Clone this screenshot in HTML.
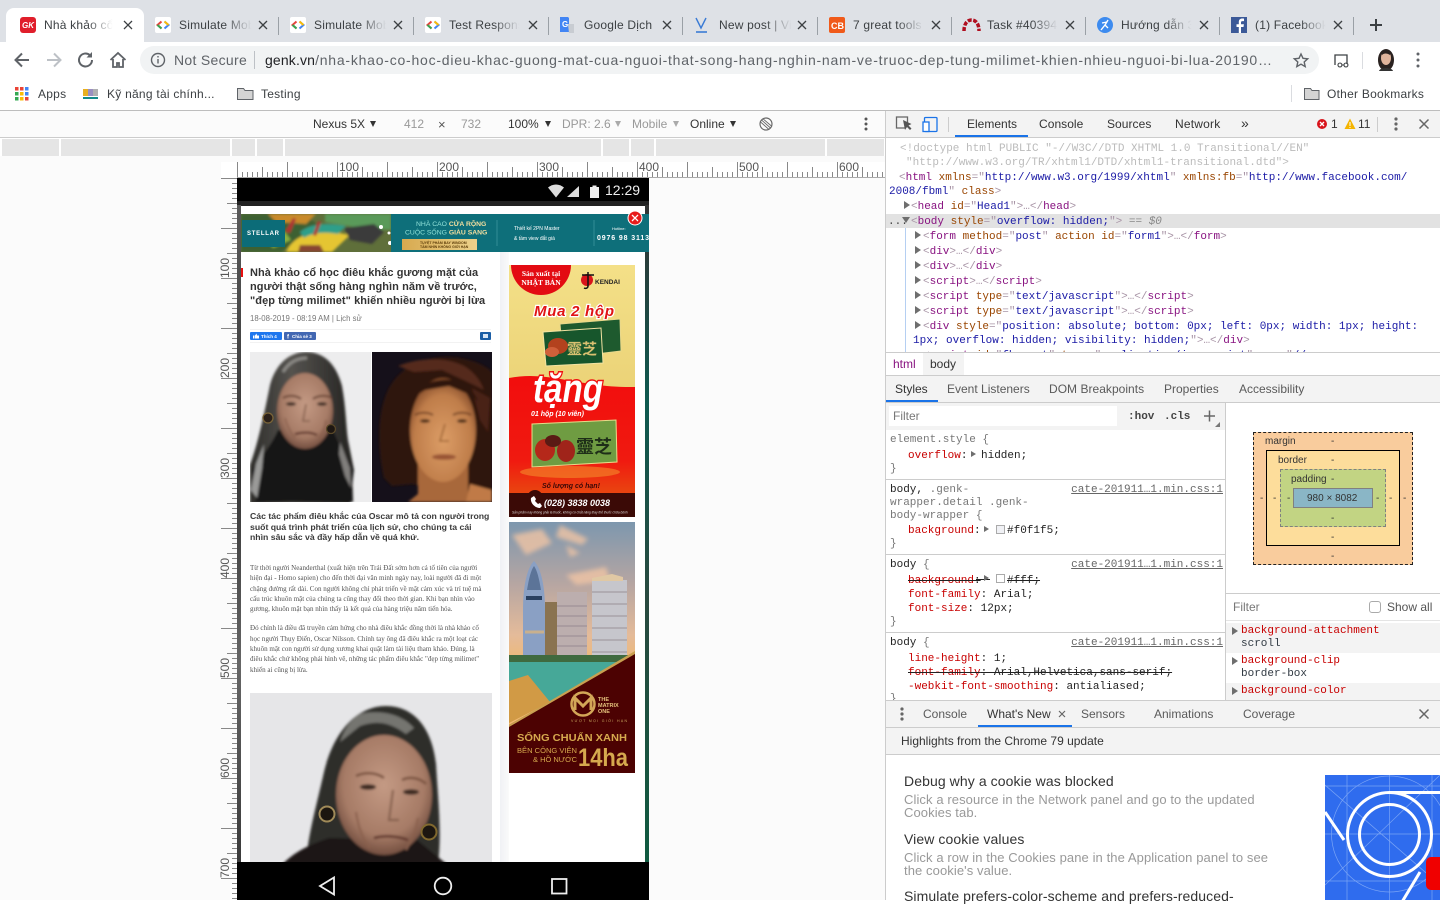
<!DOCTYPE html>
<html lang="vi"><head><meta charset="utf-8"><title>DevTools</title>
<style>
html,body{margin:0;padding:0;width:1440px;height:900px;overflow:hidden;background:#fff;font-family:"Liberation Sans",Arial,sans-serif;color:#333}
*{box-sizing:border-box}
.a{position:absolute}
.t{position:absolute;white-space:nowrap;font-size:12px;line-height:14px}
.tt{position:absolute;top:18px;white-space:nowrap;font-size:12px;letter-spacing:.2px;line-height:14px;color:#3c4043;overflow:hidden;width:74px;-webkit-mask-image:linear-gradient(90deg,#000 62%,transparent 98%);mask-image:linear-gradient(90deg,#000 62%,transparent 98%)}
.sp{position:absolute;top:17px;width:1px;height:18px;background:#9aa0a6}
.m{position:absolute;white-space:nowrap;font-family:"Liberation Mono",monospace;font-size:11px;line-height:14px;color:#303942;margin-top:3px}
.g{color:#a894a6}.p{color:#881280}.n{color:#994500}.v{color:#1a1aa6}
.r{color:#c80000}.gy{color:#777}.k{color:#222}
.lk{position:absolute;white-space:nowrap;font-family:"Liberation Mono",monospace;font-size:11px;line-height:14px;color:#666;text-decoration:underline;right:217px;margin-top:3px}
.tri{position:absolute;width:0;height:0;border-left:6px solid #6e6e6e;border-top:4px solid transparent;border-bottom:4px solid transparent}
.trid{position:absolute;width:0;height:0;border-top:6px solid #6e6e6e;border-left:4px solid transparent;border-right:4px solid transparent}
.sq{position:absolute;width:9px;height:9px;border:1px solid #aaa;background:#fff}
.bar{position:absolute;background:#f3f3f3}
.hl{position:absolute;background:#ccc}
.sg{position:absolute;top:139px;height:17px;background:#e5e5e5}
.bm{letter-spacing:.25px;color:#3c4043}
.s7{font-family:'Liberation Serif',serif;font-size:7.05px;color:#555}
.h3{font-weight:bold;font-size:11px;color:#333;letter-spacing:.07px}
.h4{font-weight:bold;font-size:8.7px;color:#3a3a3a}
.d13{font-size:13px;color:#999;letter-spacing:.09px}
.h14{font-size:14px;color:#333;letter-spacing:.09px}
.bx{font-size:10px;line-height:12px}
</style></head><body>

<!-- chrome tabs -->
<div class="a" style="left:0;top:0;width:1440px;height:42px;background:#dee1e6"></div>
<div class="a" style="left:6px;top:8px;width:138px;height:34px;background:#fff;border-radius:8px 8px 0 0"></div>
<div class="a" style="left:0;top:42px;width:1440px;height:68px;background:#fff"></div>

<svg class="a" style="left:0;top:0" width="1440" height="110" viewBox="0 0 1440 110">
 <rect x="20" y="17" width="16" height="16" rx="3" fill="#e01e2b"/>
 <text x="22" y="28" font-family="Liberation Sans" font-size="8" font-weight="bold" font-style="italic" fill="#fff">GK</text>
 <defs><g id="sim"><rect x="0" y="0" width="16" height="16" rx="2" fill="#fff"/><path d="M6.500 4.500 2.500 8l4 3.500" fill="none" stroke="#e8453c" stroke-width="2"/><path d="M2.500 8l4 3.500" stroke="#34a853" stroke-width="2" fill="none"/><path d="M9.500 4.500 13.500 8l-4 3.500" fill="none" stroke="#4285f4" stroke-width="2"/><path d="M9.500 4.500 13.500 8" stroke="#fbbc05" stroke-width="2" fill="none"/></g></defs>
 <use href="#sim" x="155" y="17"/><use href="#sim" x="290" y="17"/><use href="#sim" x="425" y="17"/>
 <path d="M560 17h8l1 1v14h-9z" fill="#4285f4"/><path d="M568 24h6v9h-5z" fill="#c8ccd2"/><text x="562" y="27" font-family="Liberation Sans" font-size="8" font-weight="bold" fill="#fff">G</text>
 <path d="M696 18l5 10 5-10" fill="none" stroke="#3a7bd5" stroke-width="1.400"/><path d="M696 32h11" stroke="#3a7bd5" stroke-width="1.600"/>
 <rect x="829" y="17" width="16" height="16" rx="2" fill="#f05a1a"/><text x="831" y="29" font-family="Liberation Sans" font-size="9" font-weight="bold" fill="#fff">CB</text>
 <path d="M964 31c0-7 3-11 7.500-11s7.500 4 7.500 11" fill="none" stroke="#b00d1e" stroke-width="3.500" stroke-dasharray="4 1.500"/>
 <circle cx="1105" cy="25" r="8" fill="#3d8bef"/><path d="M1101 30l4-5 3 3M1105 25l3-5M1102 23l5-1" fill="none" stroke="#fff" stroke-width="1.400"/>
 <rect x="1231" y="17" width="16" height="16" fill="#3b5998"/><path d="M1241 33v-6h2.500l.4-2.800H1241v-1.700c0-.9.300-1.400 1.500-1.400h1.500v-2.500c-1.800-.3-5.200-.500-5.200 3.500v2.100h-2.300V27h2.300v6z" fill="#fff"/>
 <g stroke="#3c4043" stroke-width="1.300" fill="none">
  <path d="M124 21l8 8M132 21l-8 8"/><path d="M259 21l8 8M267 21l-8 8"/><path d="M394 21l8 8M402 21l-8 8"/><path d="M529 21l8 8M537 21l-8 8"/><path d="M663 21l8 8M671 21l-8 8"/><path d="M798 21l8 8M806 21l-8 8"/><path d="M932 21l8 8M940 21l-8 8"/><path d="M1066 21l8 8M1074 21l-8 8"/><path d="M1200 21l8 8M1208 21l-8 8"/><path d="M1334 21l8 8M1342 21l-8 8"/>
 </g>
 <path d="M1376 19v12M1370 25h12" stroke="#3c4043" stroke-width="2"/>
 <rect x="140" y="46" width="1179" height="28" rx="14" fill="#f1f3f4"/>
 <path d="M29 60H16M22 53.500 15.500 60l6.500 6.500" fill="none" stroke="#5f6368" stroke-width="2"/>
 <path d="M47 60h13M54 53.500 60.500 60 54 66.500" fill="none" stroke="#bdc1c6" stroke-width="2"/>
 <path d="M92 60a6.500 6.500 0 1 1-2-4.700" fill="none" stroke="#5f6368" stroke-width="2"/><path d="M92 52v5.500h-5.500z" fill="#5f6368"/>
 <path d="M110.500 60 118 53l7.500 7M113 59v8h4v-4h2v4h4v-8" fill="none" stroke="#5f6368" stroke-width="1.800"/>
 <circle cx="158" cy="60" r="6.500" fill="none" stroke="#5f6368" stroke-width="1.400"/><path d="M158 59v4.500M158 56v1.500" stroke="#5f6368" stroke-width="1.400"/>
 <path d="M254.500 51v18" stroke="#bdc1c6"/>
 <path d="M1301 54l2 4.300 4.700.5-3.500 3.200 1 4.600-4.200-2.400-4.200 2.400 1-4.600-3.500-3.200 4.700-.5z" fill="none" stroke="#5f6368" stroke-width="1.400"/>
 <path d="M1335 65v-10h12v9" fill="none" stroke="#3c4043" stroke-width="1.300"/><path d="M1340 63a2 2 0 1 1-.1 0M1346 63a2 2 0 1 1-.1 0M1342 65h2" fill="none" stroke="#3c4043" stroke-width="1.100"/>
 <path d="M1362.500 52v17" stroke="#dadce0"/>
 <ellipse cx="1386" cy="60" rx="8" ry="11" fill="#2a2220"/><ellipse cx="1386" cy="58" rx="5" ry="7" fill="#e0b49c"/><path d="M1381 52c2-3 8-3 10 0l-1 3c-3-2-6-2-8 0z" fill="#2a2220"/><path d="M1379 71c1-4 13-4 14 0z" fill="#333"/>
 <circle cx="1418" cy="54" r="1.500" fill="#5f6368"/><circle cx="1418" cy="60" r="1.500" fill="#5f6368"/><circle cx="1418" cy="66" r="1.500" fill="#5f6368"/>
 <g>
  <rect x="15" y="87" width="3.500" height="3.500" fill="#ea4335"/><rect x="20" y="87" width="3.500" height="3.500" fill="#ea4335"/><rect x="25" y="87" width="3.500" height="3.500" fill="#4285f4"/>
  <rect x="15" y="92" width="3.500" height="3.500" fill="#34a853"/><rect x="20" y="92" width="3.500" height="3.500" fill="#fbbc05"/><rect x="25" y="92" width="3.500" height="3.500" fill="#4285f4"/>
  <rect x="15" y="97" width="3.500" height="3.500" fill="#34a853"/><rect x="20" y="97" width="3.500" height="3.500" fill="#fbbc05"/><rect x="25" y="97" width="3.500" height="3.500" fill="#ea4335"/>
 </g>
 <rect x="83" y="89" width="5" height="7" fill="#e8b020"/><rect x="88" y="89" width="5" height="7" fill="#9a8fc0"/><rect x="93" y="89" width="5" height="7" fill="#b0b0b0"/><rect x="83" y="97" width="15" height="2" fill="#138a8a"/>
 <path d="M237.500 88.500h6l1.500 2h8v9h-15.500z" fill="#d4d4d4" stroke="#5f6368"/>
 <path d="M1291.500 85v17" stroke="#dadce0"/>
 <path d="M1304.500 88.500h6l1.500 2h7v9h-14.500z" fill="#d4d4d4" stroke="#5f6368"/>
</svg>

<div class="tt" style="left:44px;width:70px">Nhà khảo cổ học</div>
<div class="tt" style="left:179px">Simulate Mobile</div>
<div class="tt" style="left:314px">Simulate Mobile</div>
<div class="tt" style="left:449px;width:72px">Test Responsive</div>
<div class="tt" style="left:584px;-webkit-mask-image:none;mask-image:none">Google Dịch</div>
<div class="tt" style="left:719px">New post | Vietnam</div>
<div class="tt" style="left:853px;width:72px">7 great tools for</div>
<div class="tt" style="left:987px;width:72px">Task #40394: T</div>
<div class="tt" style="left:1121px;width:72px">Hướng dẫn 3 cách</div>
<div class="tt" style="left:1255px;width:72px">(1) Facebook</div>
<div class="sp" style="left:278px"></div><div class="sp" style="left:413px"></div><div class="sp" style="left:548px"></div><div class="sp" style="left:682px"></div><div class="sp" style="left:817px"></div><div class="sp" style="left:951px"></div><div class="sp" style="left:1085px"></div><div class="sp" style="left:1219px"></div><div class="sp" style="left:1353px"></div>

<div class="t" style="left:174px;top:52px;font-size:14px;line-height:16px;color:#5f6368;letter-spacing:.3px">Not Secure</div>
<div class="t" style="left:265px;top:52px;width:1010px;overflow:hidden;font-size:14px;line-height:16px;color:#5f6368;letter-spacing:.77px"><span style="color:#202124;letter-spacing:.15px">genk.vn</span>/nha-khao-co-hoc-dieu-khac-guong-mat-cua-nguoi-that-song-hang-nghin-nam-ve-truoc-dep-tung-milimet-khien-nhieu-nguoi-bi-lua-20190…</div>
<div class="t bm" style="left:38px;top:87px">Apps</div>
<div class="t bm" style="left:107px;top:87px">Kỹ năng tài chính...</div>
<div class="t bm" style="left:261px;top:87px">Testing</div>
<div class="t bm" style="left:1327px;top:87px">Other Bookmarks</div>

<!-- device toolbar -->
<div class="a" style="left:0;top:110px;width:1440px;height:1px;background:#bdbdbd"></div>
<div class="a" style="left:0;top:111px;width:885px;height:789px;background:#fbfbfb"></div>
<div class="a" style="left:0;top:137px;width:885px;height:1px;background:#ccc"></div>
<div class="a" style="left:0;top:138px;width:885px;height:18px;background:#fff"></div>
<div class="t" style="left:313px;top:117px;color:#333">Nexus 5X</div>
<div class="a" style="left:370px;top:121px;border-top:6px solid #333;border-left:3.500px solid transparent;border-right:3.500px solid transparent"></div>
<div class="t" style="left:404px;top:117px;color:#999">412</div>
<div class="t" style="left:438px;top:118px;color:#555;font-size:13px">×</div>
<div class="t" style="left:461px;top:117px;color:#999">732</div>
<div class="t" style="left:508px;top:117px;color:#333">100%</div>
<div class="a" style="left:545px;top:121px;border-top:6px solid #333;border-left:3.500px solid transparent;border-right:3.500px solid transparent"></div>
<div class="t" style="left:562px;top:117px;color:#999">DPR: 2.6</div>
<div class="a" style="left:615px;top:121px;border-top:6px solid #aaa;border-left:3.500px solid transparent;border-right:3.500px solid transparent"></div>
<div class="t" style="left:632px;top:117px;color:#999">Mobile</div>
<div class="a" style="left:673px;top:121px;border-top:6px solid #aaa;border-left:3.500px solid transparent;border-right:3.500px solid transparent"></div>
<div class="t" style="left:690px;top:117px;color:#333">Online</div>
<div class="a" style="left:730px;top:121px;border-top:6px solid #333;border-left:3.500px solid transparent;border-right:3.500px solid transparent"></div>
<svg class="a" style="left:757px;top:116px" width="18" height="16"><circle cx="9" cy="8" r="6" fill="none" stroke="#666" stroke-width="1.200"/><path d="M4.500 4 13.500 12M6 2.800 15 10.500M3 5.500 12 13.500" stroke="#666" stroke-width=".9"/></svg>
<svg class="a" style="left:860px;top:116px" width="12" height="16"><circle cx="6" cy="3" r="1.500" fill="#555"/><circle cx="6" cy="8" r="1.500" fill="#555"/><circle cx="6" cy="13" r="1.500" fill="#555"/></svg>

<div class="sg" style="left:2px;width:57px"></div><div class="sg" style="left:61px;width:169px"></div><div class="sg" style="left:232px;width:23px"></div><div class="sg" style="left:257px;width:26px"></div><div class="sg" style="left:285px;width:316px"></div><div class="sg" style="left:603px;width:26px"></div><div class="sg" style="left:631px;width:23px"></div><div class="sg" style="left:656px;width:169px"></div><div class="sg" style="left:827px;width:57px"></div>

<!-- rulers -->
<div class="a" style="left:221px;top:162px;width:664px;height:16px;background:#fff"></div>
<div class="a" style="left:237px;top:172px;width:648px;height:5px;background:repeating-linear-gradient(90deg,#888 0 1px,transparent 1px 5px)"></div>
<div class="a" style="left:237px;top:167px;width:648px;height:5px;background:repeating-linear-gradient(90deg,#888 0 1px,transparent 1px 25px)"></div>
<div class="a" style="left:237px;top:162px;width:648px;height:5px;background:repeating-linear-gradient(90deg,#888 0 1px,transparent 1px 50px)"></div>
<div class="a" style="left:237px;top:177px;width:648px;height:1px;background:#aaa"></div>
<div class="t" style="left:339px;top:160px;color:#555">100</div>
<div class="t" style="left:439px;top:160px;color:#555">200</div>
<div class="t" style="left:539px;top:160px;color:#555">300</div>
<div class="t" style="left:639px;top:160px;color:#555">400</div>
<div class="t" style="left:739px;top:160px;color:#555">500</div>
<div class="t" style="left:839px;top:160px;color:#555">600</div>
<div class="a" style="left:232px;top:178px;width:5px;height:722px;background:repeating-linear-gradient(180deg,#888 0 1px,transparent 1px 5px)"></div>
<div class="a" style="left:227px;top:178px;width:5px;height:722px;background:repeating-linear-gradient(180deg,#888 0 1px,transparent 1px 25px)"></div>
<div class="a" style="left:221px;top:178px;width:6px;height:722px;background:repeating-linear-gradient(180deg,#888 0 1px,transparent 1px 50px)"></div>
<div class="t" style="left:225px;top:268px;color:#555;transform:translate(-50%,-50%) rotate(-90deg)">100</div>
<div class="t" style="left:225px;top:368px;color:#555;transform:translate(-50%,-50%) rotate(-90deg)">200</div>
<div class="t" style="left:225px;top:468px;color:#555;transform:translate(-50%,-50%) rotate(-90deg)">300</div>
<div class="t" style="left:225px;top:568px;color:#555;transform:translate(-50%,-50%) rotate(-90deg)">400</div>
<div class="t" style="left:225px;top:668px;color:#555;transform:translate(-50%,-50%) rotate(-90deg)">500</div>
<div class="t" style="left:225px;top:768px;color:#555;transform:translate(-50%,-50%) rotate(-90deg)">600</div>
<div class="t" style="left:225px;top:868px;color:#555;transform:translate(-50%,-50%) rotate(-90deg)">700</div>

<!-- device -->
<div class="a" style="left:237px;top:178px;width:412px;height:722px;background:#000"></div>
<div class="a" style="left:237px;top:201px;width:412px;height:661px;background:#222"></div>
<div class="a" style="left:237px;top:205px;width:4px;height:657px;background:linear-gradient(180deg,#5a5a5a,#333 40%,#666 70%,#3a3a3a)"></div>
<div class="a" style="left:645px;top:205px;width:4px;height:657px;background:linear-gradient(180deg,#333,#0f5a50 30%,#2a4a40 60%,#0f5a40)"></div>
<div class="a" style="left:241px;top:206px;width:404px;height:656px;background:#fff"></div>
<div class="a" style="left:500px;top:252px;width:9px;height:610px;background:linear-gradient(90deg,#f0f1f5,#fafafa)"></div>

<svg class="a" style="left:0;top:0;filter:blur(.35px)" width="1440" height="900" viewBox="0 0 1440 900">
<defs>
 <filter id="b1"><feGaussianBlur stdDeviation="1.200"/></filter>
 <filter id="b2"><feGaussianBlur stdDeviation="2.500"/></filter>
 <clipPath id="cA"><rect x="250" y="352" width="121" height="150"/></clipPath>
 <clipPath id="cB"><rect x="372" y="352" width="120" height="150"/></clipPath>
 <clipPath id="cC"><rect x="250" y="693" width="242" height="169"/></clipPath>
 <clipPath id="cP"><rect x="241" y="214" width="150" height="38"/></clipPath>
 <clipPath id="cD1"><rect x="509" y="265" width="126" height="252"/></clipPath>
 <clipPath id="cD2"><rect x="509" y="522" width="126" height="251"/></clipPath>
 <linearGradient id="sky" x1="0" y1="0" x2="0" y2="1"><stop offset="0" stop-color="#7d97ae"/><stop offset=".25" stop-color="#b7a6a2"/><stop offset=".45" stop-color="#e4bb9a"/><stop offset=".58" stop-color="#f0b870"/></linearGradient>
 <linearGradient id="yel" x1="0" y1="0" x2="0" y2="1"><stop offset="0" stop-color="#f4e088"/><stop offset="1" stop-color="#e2c566"/></linearGradient>
 <linearGradient id="red" x1="0" y1="0" x2="0" y2="1"><stop offset="0" stop-color="#f20d0d"/><stop offset=".7" stop-color="#f01a10"/><stop offset="1" stop-color="#e84a10"/></linearGradient>
 <linearGradient id="gold" x1="0" y1="0" x2="1" y2="0"><stop offset="0" stop-color="#d7a94f"/><stop offset="1" stop-color="#ecd18b"/></linearGradient>
 <radialGradient id="skA" cx=".5" cy=".42" r=".6"><stop offset="0" stop-color="#c49a84"/><stop offset=".7" stop-color="#a67b66"/><stop offset="1" stop-color="#6e4a3c"/></radialGradient>
 <radialGradient id="skB" cx=".5" cy=".6" r=".62"><stop offset="0" stop-color="#dc9d66"/><stop offset=".7" stop-color="#bf7d4a"/><stop offset="1" stop-color="#7c4526"/></radialGradient>
 <linearGradient id="hairA" x1="0" y1="0" x2="1" y2="0"><stop offset="0" stop-color="#2e2d2a"/><stop offset=".4" stop-color="#55534f"/><stop offset="1" stop-color="#232220"/></linearGradient>
</defs>

<!-- banner -->
<rect x="241" y="214" width="408" height="38" fill="#0e6f7a"/>
<g clip-path="url(#cP)">
 <rect x="241" y="214" width="150" height="38" fill="#5f6f3a"/>
 <g filter="url(#b1)">
  <path d="M241 214h60l20 12-40 26h-40z" fill="#3d6030"/>
  <path d="M268 214h48l-10 10-30-2z" fill="#c98a2a"/>
  <path d="M286 252c6-14 22-20 38-22l26 5-18 17z" fill="#e5c532"/>
  <path d="M300 232c10-8 26-10 46-6l-8 8c-12-2-24-2-34 4z" fill="#2f9f8a"/>
  <path d="M325 214h66v16l-30-2-36-6z" fill="#5a9a5a"/>
  <path d="M344 228l30-4 10 8-12 12-22-4z" fill="#3a3a3a"/>
  <path d="M300 245h20l4 7h-26z" fill="#884433"/>
  <path d="M285 232l8-14 3 1-6 14zM313 235l5-14 3 1-5 14z" fill="#b03030"/>
  <path d="M265 238l20-6 6 8-18 8z" fill="#8ab040"/>
 </g>
 <circle cx="381" cy="227" r="2" fill="#fff"/><circle cx="389" cy="233" r="1.500" fill="#fff"/><circle cx="390" cy="243" r="2" fill="#fff"/>
</g>
<rect x="242" y="220" width="43" height="27" fill="#0c6c78"/>
<text x="247" y="235" font-family="Liberation Sans" font-size="6" font-weight="bold" fill="#fff" textLength="32">STELLAR</text>
<rect x="402" y="239" width="75" height="11" fill="url(#gold)"/>
<text x="416" y="226" font-family="Liberation Sans" font-size="6.800" fill="#8fe0d8">NHÀ CAO <tspan font-weight="bold" fill="#f3df9f">CỬA RỘNG</tspan></text>
<text x="405" y="234.500" font-family="Liberation Sans" font-size="6.800" fill="#8fe0d8">CUỘC SỐNG <tspan font-weight="bold" fill="#f3df9f">GIÀU SANG</tspan></text>
<text x="420" y="244" font-family="Liberation Sans" font-size="3.500" font-weight="bold" fill="#60400c">TUYỆT PHẨM BAY WINDOM</text>
<text x="420" y="248" font-family="Liberation Sans" font-size="3.500" font-weight="bold" fill="#60400c">TẦM NHÌN KHÔNG GIỚI HẠN</text>
<path d="M497 220v26M594 220v26" stroke="#4aa0a8" stroke-width=".6"/>
<text x="514" y="230" font-family="Liberation Sans" font-size="5" fill="#fff">Thiết kế 2PN Master</text>
<text x="514" y="240" font-family="Liberation Sans" font-size="5" fill="#fff">&amp; tầm view đắt giá</text>
<text x="612" y="230" font-family="Liberation Sans" font-size="4" fill="#fff">Hotline:</text>
<text x="597" y="240" font-family="Liberation Sans" font-size="7" font-weight="bold" fill="#fff" textLength="52">0976 98 3113</text>

<rect x="241" y="268" width="2" height="9" fill="#e81010"/>

<!-- share buttons -->
<rect x="250" y="332" width="32" height="8" rx="1" fill="#1f77ee"/>
<path d="M253 335.500h1.500v3H253zM255 338.500v-3l1.500-2 .5 2h2v3z" fill="#fff"/>
<text x="261" y="338" font-family="Liberation Sans" font-size="4.500" font-weight="bold" fill="#fff">Thích 4</text>
<rect x="284" y="332" width="32" height="8" rx="1" fill="#4267b2"/>
<text x="287" y="338.500" font-family="Liberation Sans" font-size="6" font-weight="bold" fill="#fff">f</text>
<text x="292" y="338" font-family="Liberation Sans" font-size="4.500" font-weight="bold" fill="#fff">Chia sẻ 3</text>
<rect x="480" y="332" width="11" height="8" rx="1" fill="#1b5ea6"/>
<rect x="483" y="334" width="5" height="4" fill="#d8e6f5"/>
<path d="M250 329.500h241M250 342.500h241" stroke="#f2f2f2"/>

<!-- left portrait -->
<g clip-path="url(#cA)">
 <rect x="250" y="352" width="121" height="150" fill="#ededee"/>
 <g filter="url(#b1)">
  <path d="M250 465c8-22 14-50 20-80 6-22 20-33 36-33 18 0 30 12 36 34 4 22 4 40 6 54l6 30-4 34H250z" fill="url(#hairA)"/>
  <path d="M252 470c10-14 20-26 26-40l56 2c4 12 12 24 18 36l1 34H256z" fill="#141212"/>
  <path d="M251 490l5-26 8-20-2 24-5 30z" fill="#9a9a98"/>
  <path d="M340 442l10 26 1 20-6-12-6-22z" fill="#807e7c"/>
  <path d="M283 372c6-10 14-14 24-14" fill="none" stroke="#8c8a86" stroke-width="3"/>
  <ellipse cx="305" cy="411" rx="28" ry="38" fill="url(#skA)"/>
  <path d="M283 398c5-3 13-3 18 1M313 399c5-4 14-4 19-1" stroke="#6a4434" stroke-width="2" fill="none"/>
  <ellipse cx="291" cy="404" rx="5" ry="1.700" fill="#3c2a22"/><ellipse cx="322" cy="404" rx="5" ry="1.700" fill="#3c2a22"/>
  <path d="M306 404l-3 17 7 0" stroke="#86604e" stroke-width="1.600" fill="none"/>
  <path d="M295 434c8-2 16-2 22 1" stroke="#5e342c" stroke-width="2.200" fill="none"/>
  <path d="M285 418c2 8 6 14 10 20M326 420c-1 8-4 14-8 18" fill="none" stroke="#8a604e" stroke-width="1.500"/>
 </g>
 <circle cx="268" cy="418" r="5" fill="#2a201a" stroke="#7a6438" stroke-width="1.300"/>
 <circle cx="331" cy="429" r="4.500" fill="#1e1712" stroke="#5a4828" stroke-width="1.300"/>
</g>

<!-- right portrait -->
<g clip-path="url(#cB)">
 <rect x="372" y="352" width="120" height="150" fill="#15101a"/>
 <g filter="url(#b1)">
  <path d="M384 478c-6-28-8-62 4-88 14-28 44-36 72-32 16 3 26 8 32 14v120l-20 6-28-8-32-6-20 2z" fill="#2e140b"/>
  <path d="M398 366c20-8 46-10 66 0 10 6 16 14 20 24l-12-6-30-14-28 2z" fill="#55291a"/>
  <path d="M472 388l18 10-2 34-8-12z" fill="#4a2214"/>
  <path d="M418 462h50v34l12 6h-72l10-8z" fill="#a8683a"/>
  <path d="M470 484l22 6v12h-26z" fill="#c07a46"/>
  <ellipse cx="443" cy="430" rx="33" ry="52" fill="url(#skB)"/>
  <path d="M409 400c10-16 26-22 44-20 12 2 20 10 26 22l-6-6-24-10-24 4z" fill="#2e140b"/>
  <path d="M415 415c5-3 13-3 18 0M453 415c5-3 13-3 18 0" stroke="#6d3e20" stroke-width="1.800" fill="none"/>
  <ellipse cx="425" cy="421" rx="5" ry="1.800" fill="#4a2a18"/><ellipse cx="462" cy="421" rx="5" ry="1.800" fill="#4a2a18"/>
  <path d="M445 424l-5 17h9" stroke="#a06636" stroke-width="1.600" fill="none"/>
  <ellipse cx="444" cy="457" rx="12" ry="2.800" fill="#9a5535"/>
 </g>
</g>

<!-- bottom portrait -->
<g clip-path="url(#cC)">
 <rect x="250" y="693" width="242" height="169" fill="#e6e6e8"/>
 <g filter="url(#b1)">
  <path d="M306 864c2-30 10-56 18-92 10-42 34-66 62-66 28 0 46 22 50 58 2 34 6 70 2 100z" fill="#2e2d2a"/>
  <path d="M360 714c16-4 40-2 54 14l-8 6c-16-12-30-14-46-8l-20 16c4-12 10-22 20-28z" fill="#75756f"/>
  <path d="M281 866c12-14 30-22 48-28l88 2 32 26z" fill="#1b1917"/>
  <ellipse cx="384" cy="795" rx="48" ry="60" fill="url(#skA)"/>
  <path d="M356 776c8-4 20-4 28 2M402 780c8-4 18-2 24 4" stroke="#7a5240" stroke-width="2.500" fill="none"/>
  <ellipse cx="368" cy="787" rx="8" ry="2.800" fill="#3c2a22"/><ellipse cx="411" cy="792" rx="8" ry="2.800" fill="#3c2a22"/>
  <path d="M393 790l-4 30h10" stroke="#86604e" stroke-width="2.200" fill="none"/>
  <path d="M374 838c10-3 24-2 34 2" stroke="#5e342c" stroke-width="2.500" fill="none"/>
  <path d="M356 812c2 14 6 26 14 36M418 818c-2 12-6 22-12 32" stroke="#8a604e" stroke-width="2" fill="none"/>
 </g>
 <circle cx="327" cy="814" r="7.500" fill="#1c1610" stroke="#a08a58" stroke-width="2"/>
 <circle cx="429" cy="832" r="7.500" fill="#1c1610" stroke="#80682e" stroke-width="2"/>
</g>

<!-- ad 1 -->
<g clip-path="url(#cD1)">
 <rect x="509" y="265" width="126" height="252" fill="url(#yel)"/>
 <path d="M509 378c40-8 70 10 126 9v110H509z" fill="url(#red)"/>
 <circle cx="541" cy="265" r="30" fill="#e30b12"/>
 <text x="541" y="276" text-anchor="middle" font-family="Liberation Serif" font-size="7.500" font-weight="bold" fill="#fff">Sản xuất tại</text>
 <text x="541" y="285" text-anchor="middle" font-family="Liberation Serif" font-size="7.500" font-weight="bold" fill="#fff">NHẬT BẢN</text>
 <circle cx="587" cy="280" r="6" fill="#d9141a"/><path d="M582 275h12M588 272v14c0 2-2 3-4 2" stroke="#111" stroke-width="1.500" fill="none"/>
 <text x="595" y="284" font-family="Liberation Sans" font-size="6.500" font-weight="bold" fill="#222">KENDAI</text>
 <text x="534" y="316" font-family="Liberation Sans" font-size="15" font-style="italic" font-weight="bold" fill="#e01414" stroke="#fff" stroke-width="2.500" paint-order="stroke" textLength="80">Mua 2 hộp</text>
 <path d="M560 324l60-5 1 32-58 7z" fill="#1e5a2e" stroke="#e8d88c"/>
 <path d="M543 332l58-4 2 35-57 3z" fill="#17562c" stroke="#f3e3a2" stroke-width="1"/>
 <ellipse cx="558" cy="346" rx="10" ry="8" fill="#b3421e"/><ellipse cx="552" cy="352" rx="7" ry="5" fill="#d0603a"/>
 <text x="567" y="354" font-family="Liberation Sans,Noto Sans CJK TC,sans-serif" font-size="15" font-weight="bold" fill="#d9c070">靈芝</text>
 <text x="533" y="402" font-family="Liberation Sans" font-size="40" font-style="italic" font-weight="bold" fill="#fff" stroke="#f01010" stroke-width="3" paint-order="stroke" textLength="70" lengthAdjust="spacingAndGlyphs">tặng</text>
 <text x="531" y="416" font-family="Liberation Sans" font-size="7" font-style="italic" font-weight="bold" fill="#fff">01 hộp (10 viên)</text>
 <path d="M532 424l84-4 1 42-85 5z" fill="#6f9c42" stroke="#e8dc8a"/>
 <ellipse cx="545" cy="450" rx="10" ry="11" fill="#b5281a"/><ellipse cx="566" cy="451" rx="9" ry="11" fill="#a0241a"/><ellipse cx="553" cy="441" rx="8" ry="6" fill="#5a1a14"/>
 <text x="576" y="453" font-family="Liberation Sans,Noto Sans CJK TC,sans-serif" font-size="18" font-weight="bold" fill="#1e2e18">靈芝</text>
 <ellipse cx="570" cy="472" rx="50" ry="6" fill="#f5a030" opacity=".5"/>
 <text x="542" y="488" font-family="Liberation Sans" font-size="7" font-style="italic" font-weight="bold" fill="#3a0808">Số lượng có hạn!</text>
 <rect x="509" y="493" width="126" height="24" fill="#3b0a06"/>
 <circle cx="535" cy="498" r="8" fill="#3b0a06"/>
 <path d="M531 498l3-2 2 3-1 2 3 3 2-1 2 3-2 2c-5 0-10-5-9-10z" fill="#fff"/>
 <text x="544" y="506" font-family="Liberation Sans" font-size="9" font-style="italic" font-weight="bold" fill="#fff">(028) 3838 0038</text>
 <text x="512" y="513.500" font-family="Liberation Sans" font-size="3.200" font-style="italic" fill="#ddd">Sản phẩm này không phải là thuốc, không có chất năng thay thế thuốc chữa bệnh</text>
</g>

<!-- ad 2 -->
<g clip-path="url(#cD2)">
 <rect x="509" y="522" width="126" height="251" fill="url(#sky)"/>
 <g filter="url(#b2)" fill="#f0c4a4" opacity=".8"><path d="M512 535l30-6 10 14-26 12z"/><path d="M560 525l28 14-6 6-26-8z"/><path d="M566 545l14 8-10 4z"/><path d="M566 575l40-8 4 14-34 4z"/></g>
 <path d="M523 658V610c0-24 4-42 11-49 7 7 11 25 11 49v48z" fill="#8aa0c4"/><path d="M527 590c2-12 4-20 7-24 3 4 5 12 7 24z" fill="#5c7498"/><path d="M526 598h16" stroke="#2a4060" stroke-width="4"/><path d="M525 632h19" stroke="#c8b08e" stroke-width="3"/>
 <rect x="545" y="602" width="12" height="56" fill="#8a7350"/>
 <rect x="557" y="592" width="30" height="66" fill="#bcaeae"/>
 <rect x="592" y="580" width="35" height="78" fill="#c6c6cc"/>
 <path d="M592 581v-3l20-4 11 3v4z" fill="#e0c8a4"/>
 <g stroke="#8a8088" stroke-width=".8"><path d="M557 606h30M557 616h30M557 626h30M557 636h30M557 646h30M592 592h35M592 604h35M592 616h35M592 628h35M592 640h35M592 652h35"/></g>
 <rect x="509" y="655" width="126" height="8" fill="#3f6a3f"/>
 <rect x="509" y="662" width="126" height="45" fill="#46a898"/>
 <path d="M509 725 635 653v120H509z" fill="#4c0202"/>
 <path d="M509 725 635 651l0 3-126 73z" fill="#c9a050"/>
 <path d="M509 681l19-6 22 27-41 21z" fill="#d19a45"/>
 <circle cx="583" cy="704" r="11.500" fill="none" stroke="#d3a657" stroke-width="2.500"/><path d="M575 710v-12l8 8 8-8v12" fill="none" stroke="#d3a657" stroke-width="3"/>
 <text x="598" y="701" font-family="Liberation Sans" font-size="5.500" font-weight="bold" fill="#e4c27c">THE</text>
 <text x="598" y="707" font-family="Liberation Sans" font-size="5.500" font-weight="bold" fill="#e4c27c">MATRIX</text>
 <text x="598" y="713" font-family="Liberation Sans" font-size="5.500" font-weight="bold" fill="#e4c27c">ONE</text>
 <text x="571" y="722" font-family="Liberation Sans" font-size="3.500" fill="#c9a860" textLength="56">VƯỢT MỌI GIỚI HẠN</text>
 <text x="517" y="741" font-family="Liberation Sans" font-size="10" font-weight="bold" fill="#d6a94e" textLength="110" lengthAdjust="spacingAndGlyphs">SỐNG CHUẨN XANH</text>
 <text x="517" y="753" font-family="Liberation Sans" font-size="7" fill="#d6a94e" textLength="60" lengthAdjust="spacingAndGlyphs">BÊN CÔNG VIÊN</text>
 <text x="533" y="762" font-family="Liberation Sans" font-size="7" fill="#d6a94e" textLength="44" lengthAdjust="spacingAndGlyphs">&amp; HỒ NƯỚC</text>
 <text x="578" y="766" font-family="Liberation Sans" font-size="25" font-weight="bold" fill="#d6a94e" textLength="50" lengthAdjust="spacingAndGlyphs">14ha</text>
</g>
</svg>

<!-- article text -->
<div style="position:absolute;left:0;top:0;filter:blur(.25px)">
<div class="t h3" style="left:250px;top:266px">Nhà khảo cổ học điêu khắc gương mặt của</div>
<div class="t h3" style="left:250px;top:280px">người thật sống hàng nghìn năm về trước,</div>
<div class="t h3" style="left:250px;top:294px">"đẹp từng milimet" khiến nhiều người bị lừa</div>
<div class="t" style="left:250px;top:312px;font-size:7.800px;color:#777">18-08-2019 - 08:19 AM | Lịch sử</div>
<div class="t h4" style="left:250px;top:509px">Các tác phẩm điêu khắc của Oscar mô tả con người trong</div>
<div class="t h4" style="left:250px;top:520px">suốt quá trình phát triển của lịch sử, cho chúng ta cái</div>
<div class="t h4" style="left:250px;top:530px">nhìn sâu sắc và đầy hấp dẫn về quá khứ.</div>
<div class="t s7" style="left:250px;top:561px">Từ thời người Neanderthal (xuất hiện trên Trái Đất sớm hơn cả tổ tiên của người</div>
<div class="t s7" style="left:250px;top:571px">hiện đại - Homo sapien) cho đến thời đại văn minh ngày nay, loài người đã đi một</div>
<div class="t s7" style="left:250px;top:582px">chặng đường rất dài. Con người không chỉ phát triển về mặt cảm xúc và trí tuệ mà</div>
<div class="t s7" style="left:250px;top:592px">cấu trúc khuôn mặt của chúng ta cũng thay đổi theo thời gian. Khi bạn nhìn vào</div>
<div class="t s7" style="left:250px;top:602px">gương, khuôn mặt bạn nhìn thấy là kết quả của hàng triệu năm tiến hóa.</div>
<div class="t s7" style="left:250px;top:621px">Đó chính là điều đã truyền cảm hứng cho nhà điêu khắc đồng thời là nhà khảo cổ</div>
<div class="t s7" style="left:250px;top:632px">học người Thụy Điển, Oscar Nilsson. Chính tay ông đã điêu khắc ra một loạt các</div>
<div class="t s7" style="left:250px;top:642px">khuôn mặt con người sử dụng xương khai quật làm tài liệu tham khảo. Đúng, là</div>
<div class="t s7" style="left:250px;top:652px">điêu khắc chứ không phải hình vẽ, những tác phẩm điêu khắc "đẹp từng milimet"</div>
<div class="t s7" style="left:250px;top:663px">khiến ai cũng bị lừa.</div>
</div>

<!-- status & nav bars -->
<div class="t" style="left:605px;top:183px;font-size:14px;color:#eee">12:29</div>
<svg class="a" style="left:0;top:0;pointer-events:none" width="1440" height="900" viewBox="0 0 1440 900">
 <path d="M548 187.500c5-4 11-4 16 0l-8 10z" fill="#ddd"/>
 <path d="M567 197l12-11v11z" fill="#ddd"/>
 <rect x="590" y="187" width="9" height="11" fill="#eee"/><rect x="592.500" y="185.500" width="4" height="2" fill="#eee"/>
 <rect x="237" y="862" width="412" height="38" fill="#000"/>
 <path d="M334 877.500v17l-14-8.500z" fill="none" stroke="#eee" stroke-width="1.800"/>
 <circle cx="443" cy="886" r="8.300" fill="none" stroke="#eee" stroke-width="1.800"/>
 <rect x="552" y="879" width="14.500" height="14.500" fill="none" stroke="#eee" stroke-width="1.800"/>
 <circle cx="635" cy="218" r="7" fill="#e81c1c" stroke="#fff"/><path d="M632 215l6 6M638 215l-6 6" stroke="#fff" stroke-width="1.300"/>
</svg>

<!-- DEVTOOLS -->
<div class="a" style="left:885px;top:111px;width:555px;height:789px;background:#fff"></div>
<div class="a" style="left:885px;top:111px;width:1px;height:789px;background:#ccc"></div>
<div class="bar" style="left:886px;top:111px;width:554px;height:26px"></div>
<div class="hl" style="left:886px;top:137px;width:554px;height:1px"></div>
<div class="a" style="left:955px;top:135px;width:73px;height:2px;background:#1a73e8"></div>
<div class="t" style="left:967px;top:117px">Elements</div>
<div class="t" style="left:1039px;top:117px;letter-spacing:.05px">Console</div>
<div class="t" style="left:1107px;top:117px;letter-spacing:.05px">Sources</div>
<div class="t" style="left:1175px;top:117px;letter-spacing:.2px">Network</div>
<div class="t" style="left:1241px;top:116px;font-size:14px">»</div>
<div class="t" style="left:1331px;top:117px">1</div>
<div class="t" style="left:1358px;top:117px">11</div>
<svg class="a" style="left:886px;top:111px" width="554" height="26" viewBox="886 111 554 26">
 <path d="M906 128h-9.500v-11h11v6" fill="none" stroke="#666" stroke-width="1.300"/><path d="M903 120l2 10 2-3 3 3 1.500-1.500-3-3 3-1.500z" fill="#555"/>
 <rect x="924.500" y="117.500" width="12.500" height="14" rx="1" fill="none" stroke="#1a73e8" stroke-width="1.300"/><rect x="923" y="122" width="6" height="9.500" fill="#fff" stroke="#1a73e8" stroke-width="1.300"/>
 <path d="M948.500 117v15" stroke="#ccc"/>
 <circle cx="1322" cy="124" r="5" fill="#d8141c"/><path d="M1320 122l4 4M1324 122l-4 4" stroke="#fff" stroke-width="1.300"/>
 <path d="M1350 118.500l5.500 10.500h-11z" fill="#f4b400"/><path d="M1350 122v4M1350 127v1" stroke="#fff" stroke-width="1"/>
 <path d="M1377.500 117v15" stroke="#ccc"/>
 <circle cx="1396" cy="119" r="1.600" fill="#666"/><circle cx="1396" cy="124" r="1.600" fill="#666"/><circle cx="1396" cy="129" r="1.600" fill="#666"/>
 <path d="M1419.500 119.500l9 9M1428.500 119.500l-9 9" stroke="#666" stroke-width="1.500"/>
</svg>

<!-- DOM -->
<div class="a" style="left:886px;top:214px;width:554px;height:14px;background:#e2e2e2"></div>
<div class="a" style="left:905px;top:228px;width:1px;height:124px;background:#b5cff2"></div>
<div class="m" style="left:900px;top:139px;color:#bbb">&lt;!doctype html PUBLIC "-//W3C//DTD XHTML 1.0 Transitional//EN"</div>
<div class="m" style="left:906px;top:153px;color:#bbb">"http://www.w3.org/TR/xhtml1/DTD/xhtml1-transitional.dtd"&gt;</div>
<div class="m" style="left:899px;top:168px"><span class="g">&lt;</span><span class="p">html</span> <span class="n">xmlns</span><span class="g">="</span><span class="v">http://www.w3.org/1999/xhtml</span><span class="g">"</span> <span class="n">xmlns:fb</span><span class="g">="</span><span class="v">http://www.facebook.com/</span></div>
<div class="m" style="left:889px;top:182px"><span class="v">2008/fbml</span><span class="g">"</span> <span class="n">class</span><span class="g">&gt;</span></div>
<div class="tri" style="left:904px;top:201px"></div>
<div class="m" style="left:911px;top:197px"><span class="g">&lt;</span><span class="p">head</span> <span class="n">id</span><span class="g">="</span><span class="v">Head1</span><span class="g">"&gt;…&lt;/</span><span class="p">head</span><span class="g">&gt;</span></div>
<div class="m" style="left:888px;top:212px;color:#444">...</div>
<div class="trid" style="left:902px;top:217px"></div>
<div class="m" style="left:911px;top:212px"><span class="g">&lt;</span><span class="p">body</span> <span class="n">style</span><span class="g">="</span><span class="v">overflow: hidden;</span><span class="g">"&gt;</span> <span style="color:#888">==</span> <i style="color:#888">$0</i></div>
<div class="tri" style="left:915px;top:231px"></div>
<div class="m" style="left:923px;top:227px"><span class="g">&lt;</span><span class="p">form</span> <span class="n">method</span><span class="g">="</span><span class="v">post</span><span class="g">"</span> <span class="n">action</span> <span class="n">id</span><span class="g">="</span><span class="v">form1</span><span class="g">"&gt;…&lt;/</span><span class="p">form</span><span class="g">&gt;</span></div>
<div class="tri" style="left:915px;top:246px"></div>
<div class="m" style="left:923px;top:242px"><span class="g">&lt;</span><span class="p">div</span><span class="g">&gt;…&lt;/</span><span class="p">div</span><span class="g">&gt;</span></div>
<div class="tri" style="left:915px;top:261px"></div>
<div class="m" style="left:923px;top:257px"><span class="g">&lt;</span><span class="p">div</span><span class="g">&gt;…&lt;/</span><span class="p">div</span><span class="g">&gt;</span></div>
<div class="tri" style="left:915px;top:276px"></div>
<div class="m" style="left:923px;top:272px"><span class="g">&lt;</span><span class="p">script</span><span class="g">&gt;…&lt;/</span><span class="p">script</span><span class="g">&gt;</span></div>
<div class="tri" style="left:915px;top:291px"></div>
<div class="m" style="left:923px;top:287px"><span class="g">&lt;</span><span class="p">script</span> <span class="n">type</span><span class="g">="</span><span class="v">text/javascript</span><span class="g">"&gt;…&lt;/</span><span class="p">script</span><span class="g">&gt;</span></div>
<div class="tri" style="left:915px;top:306px"></div>
<div class="m" style="left:923px;top:302px"><span class="g">&lt;</span><span class="p">script</span> <span class="n">type</span><span class="g">="</span><span class="v">text/javascript</span><span class="g">"&gt;…&lt;/</span><span class="p">script</span><span class="g">&gt;</span></div>
<div class="tri" style="left:915px;top:321px"></div>
<div class="m" style="left:923px;top:317px"><span class="g">&lt;</span><span class="p">div</span> <span class="n">style</span><span class="g">="</span><span class="v">position: absolute; bottom: 0px; left: 0px; width: 1px; height:</span></div>
<div class="m" style="left:913px;top:331px"><span class="v">1px; overflow: hidden; visibility: hidden;</span><span class="g">"&gt;…&lt;/</span><span class="p">div</span><span class="g">&gt;</span></div>
<div class="a" style="left:886px;top:346px;width:554px;height:6px;overflow:hidden"><div class="m" style="left:37px;top:0px"><span class="g">&lt;</span><span class="p">script</span> <span class="n">id</span><span class="g">="</span><span class="v">fb-root</span><span class="g">"</span> <span class="n">type</span><span class="g">="</span><span class="v">application/javascript</span><span class="g">"</span> <span class="n">src</span><span class="g">="</span><span class="v">//</span></div></div>

<!-- breadcrumb -->
<div class="hl" style="left:886px;top:352px;width:554px;height:1px"></div>
<div class="a" style="left:923px;top:353px;width:41px;height:22px;background:#f3f3f3"></div>
<div class="t" style="left:893px;top:357px;color:#881280">html</div>
<div class="t" style="left:930px;top:357px">body</div>
<div class="hl" style="left:886px;top:375px;width:554px;height:1px"></div>

<!-- style tabs -->
<div class="bar" style="left:886px;top:376px;width:554px;height:26px"></div>
<div class="a" style="left:886px;top:400px;width:52px;height:2px;background:#1a73e8"></div>
<div class="t" style="left:895px;top:382px">Styles</div>
<div class="t" style="left:947px;top:382px;color:#5a5a5a">Event Listeners</div>
<div class="t" style="left:1049px;top:382px;color:#5a5a5a;letter-spacing:.03px">DOM Breakpoints</div>
<div class="t" style="left:1164px;top:382px;color:#5a5a5a">Properties</div>
<div class="t" style="left:1239px;top:382px;color:#5a5a5a">Accessibility</div>
<div class="hl" style="left:886px;top:402px;width:554px;height:1px"></div>

<!-- styles filter -->
<div class="bar" style="left:886px;top:403px;width:340px;height:27px"></div>
<div class="a" style="left:889px;top:406px;width:228px;height:20px;background:#fff"></div>
<div class="t" style="left:893px;top:409px;color:#777">Filter</div>
<div class="m" style="left:1128px;top:407px;font-weight:bold;color:#444">:hov</div>
<div class="m" style="left:1164px;top:407px;font-weight:bold;color:#444">.cls</div>
<svg class="a" style="left:1200px;top:407px" width="24" height="20"><path d="M4 9h11M9.500 3.500v11" stroke="#666" stroke-width="1.500"/><path d="M20 15v5h-5z" fill="#777"/></svg>
<div class="a" style="left:1225px;top:403px;width:1px;height:297px;background:#ccc"></div>

<!-- rules -->
<div class="m" style="left:890px;top:430px"><span class="gy">element.style {</span></div>
<div class="m" style="left:908px;top:446px"><span class="r">overflow</span><span class="k">:</span></div>
<div class="tri" style="left:971px;top:451px;border-left-width:5px;border-top-width:3.500px;border-bottom-width:3.500px"></div>
<div class="m" style="left:981px;top:446px"><span class="k">hidden;</span></div>
<div class="m" style="left:890px;top:459px"><span class="gy">}</span></div>
<div class="hl" style="left:886px;top:479px;width:339px;height:1px"></div>
<div class="m" style="left:890px;top:480px"><span class="k">body,</span> <span class="gy">.genk-</span></div>
<div class="m" style="left:890px;top:493px"><span class="gy">wrapper.detail .genk-</span></div>
<div class="m" style="left:890px;top:506px"><span class="gy">body-wrapper {</span></div>
<div class="lk" style="top:480px">cate-201911…1.min.css:1</div>
<div class="m" style="left:908px;top:521px"><span class="r">background</span><span class="k">:</span></div>
<div class="tri" style="left:984px;top:526px;border-left-width:5px;border-top-width:3.500px;border-bottom-width:3.500px"></div>
<div class="sq" style="left:996px;top:525px;background:#f0f1f5"></div>
<div class="m" style="left:1007px;top:521px"><span class="k">#f0f1f5;</span></div>
<div class="m" style="left:890px;top:534px"><span class="gy">}</span></div>
<div class="hl" style="left:886px;top:554px;width:339px;height:1px"></div>
<div class="m" style="left:890px;top:555px"><span class="k">body</span> <span class="gy">{</span></div>
<div class="lk" style="top:555px">cate-201911…1.min.css:1</div>
<div class="m" style="left:908px;top:571px;text-decoration:line-through;color:#222"><span class="r">background</span><span class="k">:</span></div>
<div class="a" style="left:976px;top:579px;width:14px;height:1px;background:#222"></div>
<div class="tri" style="left:984px;top:575px;border-left-width:5px;border-top-width:3.500px;border-bottom-width:3.500px"></div>
<div class="sq" style="left:996px;top:574px"></div>
<div class="m" style="left:1007px;top:571px;text-decoration:line-through;color:#222">#fff;</div>
<div class="m" style="left:908px;top:585px"><span class="r">font-family</span><span class="k">:</span> <span class="k">Arial;</span></div>
<div class="m" style="left:908px;top:599px"><span class="r">font-size</span><span class="k">:</span> <span class="k">12px;</span></div>
<div class="m" style="left:890px;top:612px"><span class="gy">}</span></div>
<div class="hl" style="left:886px;top:632px;width:339px;height:1px"></div>
<div class="m" style="left:890px;top:633px"><span class="k">body</span> <span class="gy">{</span></div>
<div class="lk" style="top:633px">cate-201911…1.min.css:1</div>
<div class="m" style="left:908px;top:649px"><span class="r">line-height</span><span class="k">:</span> <span class="k">1;</span></div>
<div class="m" style="left:908px;top:663px;text-decoration:line-through;color:#222"><span class="r">font-family</span><span class="k">: Arial,Helvetica,sans-serif;</span></div>
<div class="m" style="left:908px;top:677px"><span class="r">-webkit-font-smoothing</span><span class="k">:</span> <span class="k">antialiased;</span></div>
<div class="a" style="left:886px;top:692px;width:339px;height:8px;overflow:hidden"><div class="m" style="left:4px;top:-3px"><span class="gy">}</span></div></div>

<!-- box model -->
<div class="a" style="left:1253px;top:432px;width:160px;height:133px;background:#f9cc9d;border:1px dashed #222"></div>
<div class="a" style="left:1266px;top:450px;width:134px;height:96px;background:#fddd9b;border:1px solid #000"></div>
<div class="a" style="left:1280px;top:469px;width:106px;height:58px;background:#c2d483;border:1px dashed #808080"></div>
<div class="a" style="left:1293px;top:488px;width:80px;height:20px;background:#8ab6c6;border:1px solid #808080"></div>
<div class="t bx" style="left:1265px;top:436px">margin</div>
<div class="t bx" style="left:1331px;top:436px">-</div>
<div class="t bx" style="left:1278px;top:455px">border</div>
<div class="t bx" style="left:1331px;top:455px">-</div>
<div class="t bx" style="left:1291px;top:474px">padding</div>
<div class="t bx" style="left:1331px;top:474px">-</div>
<div class="t bx" style="left:1307px;top:493px">980 × 8082</div>
<div class="t bx" style="left:1260px;top:493px">-</div><div class="t bx" style="left:1273px;top:493px">-</div><div class="t bx" style="left:1287px;top:493px">-</div>
<div class="t bx" style="left:1376px;top:493px">-</div><div class="t bx" style="left:1389px;top:493px">-</div><div class="t bx" style="left:1403px;top:493px">-</div>
<div class="t bx" style="left:1331px;top:513px">-</div><div class="t bx" style="left:1331px;top:532px">-</div><div class="t bx" style="left:1331px;top:551px">-</div>

<div class="hl" style="left:1226px;top:593px;width:214px;height:1px"></div>
<div class="t" style="left:1233px;top:600px;color:#777">Filter</div>
<div class="a" style="left:1369px;top:601px;width:12px;height:12px;border:1px solid #aaa;border-radius:3px;background:#fff"></div>
<div class="t" style="left:1387px;top:600px;color:#555">Show all</div>
<div class="a" style="left:1226px;top:620px;width:214px;height:1px;background:#e4e4e4"></div>
<div class="bar" style="left:1226px;top:623px;width:214px;height:30px"></div>
<div class="bar" style="left:1226px;top:683px;width:214px;height:17px"></div>
<div class="tri" style="left:1232px;top:627px"></div>
<div class="m" style="left:1241px;top:621px;color:#c80000">background-attachment</div>
<div class="m" style="left:1241px;top:634px">scroll</div>
<div class="tri" style="left:1232px;top:657px"></div>
<div class="m" style="left:1241px;top:651px;color:#c80000">background-clip</div>
<div class="m" style="left:1241px;top:664px">border-box</div>
<div class="tri" style="left:1232px;top:687px"></div>
<div class="m" style="left:1241px;top:681px;color:#c80000">background-color</div>

<!-- drawer -->
<div class="hl" style="left:886px;top:700px;width:554px;height:1px"></div>
<div class="bar" style="left:886px;top:701px;width:554px;height:26px"></div>
<div class="hl" style="left:886px;top:727px;width:554px;height:1px"></div>
<div class="a" style="left:978px;top:725px;width:94px;height:2px;background:#1a73e8"></div>
<div class="t" style="left:923px;top:707px;color:#5a5a5a">Console</div>
<div class="t" style="left:987px;top:707px">What's New</div>
<div class="t" style="left:1081px;top:707px;color:#5a5a5a">Sensors</div>
<div class="t" style="left:1154px;top:707px;color:#5a5a5a">Animations</div>
<div class="t" style="left:1243px;top:707px;color:#5a5a5a">Coverage</div>
<svg class="a" style="left:886px;top:701px" width="554" height="26" viewBox="886 701 554 26">
 <circle cx="902" cy="709" r="1.600" fill="#666"/><circle cx="902" cy="714" r="1.600" fill="#666"/><circle cx="902" cy="719" r="1.600" fill="#666"/>
 <path d="M1059 711l6 6M1065 711l-6 6" stroke="#666" stroke-width="1.200"/>
 <path d="M1419.500 709.500l9 9M1428.500 709.500l-9 9" stroke="#666" stroke-width="1.500"/>
</svg>
<div class="bar" style="left:886px;top:728px;width:554px;height:26px"></div>
<div class="hl" style="left:886px;top:754px;width:554px;height:1px"></div>
<div class="t" style="left:901px;top:734px">Highlights from the Chrome 79 update</div>
<div class="t h14" style="left:904px;top:774px">Debug why a cookie was blocked</div>
<div class="t d13" style="left:904px;top:793px">Click a resource in the Network panel and go to the updated</div>
<div class="t d13" style="left:904px;top:806px">Cookies tab.</div>
<div class="t h14" style="left:904px;top:832px">View cookie values</div>
<div class="t d13" style="left:904px;top:851px">Click a row in the Cookies pane in the Application panel to see</div>
<div class="t d13" style="left:904px;top:864px">the cookie's value.</div>
<div class="t h14" style="left:904px;top:889px">Simulate prefers-color-scheme and prefers-reduced-</div>
<svg class="a" style="left:1325px;top:775px" width="115" height="125" viewBox="1325 775 115 125">
 <rect x="1325" y="775" width="115" height="125" fill="#2f6cee"/>
 <g stroke="#7aa4f5" stroke-width=".7" fill="none">
  <path d="M1325 786h115M1325 834h115M1325 881h115M1347 775v125M1389.500 775v125M1432 775v125M1325 785l115 100M1325 885l115-110"/>
  <circle cx="1389.500" cy="834" r="58"/>
 </g>
 <g stroke="#fff" fill="none">
  <circle cx="1389.500" cy="834.500" r="30" stroke-width="3"/>
  <circle cx="1389.500" cy="834.500" r="42" stroke-width="3"/>
  <path d="M1325 812l19 28M1390 792.500h50M1420 872l-18 30" stroke-width="3"/>
 </g>
 <rect x="1426" y="857" width="20" height="33" rx="5" fill="#f00000"/>
</svg>
</body></html>
